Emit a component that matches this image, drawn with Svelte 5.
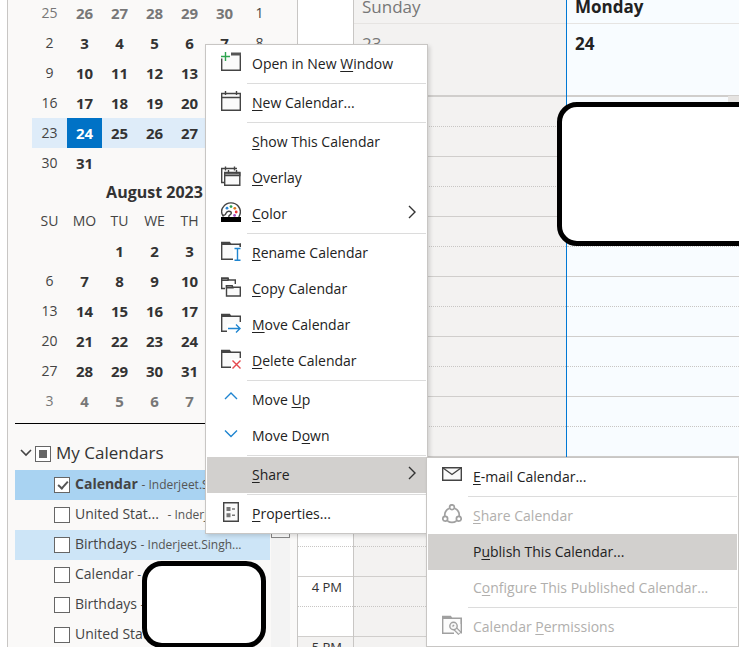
<script lang="ts">
  type Day = { day: number; dim?: boolean; today?: boolean };
  type MenuItem = {
    label?: [string, string, string];
    icon?: string;
    arrow?: boolean;
    active?: boolean;
    disabled?: boolean;
    separator?: boolean;
    children?: MenuItem[];
  };

  const weekdays = ['SU', 'MO', 'TU', 'WE', 'TH', 'FR', 'SA'];

  // Builds the week rows of a month, padded with days of its neighbours
  function weeks(first: number, before: number, length: number, count: number, fill: boolean, today = 0) {
    const rows: (Day | null)[][] = [];
    for (let i = 0; i < count; i++) {
      const n = first + i;
      let cell: Day | null;
      if (n < 1) cell = before ? { day: before + n, dim: true } : null;
      else if (n > length) cell = fill ? { day: n - length, dim: true } : null;
      else cell = { day: n, today: n === today };
      if (i % 7 === 0) rows.push([]);
      rows[rows.length - 1].push(cell);
    }
    return rows;
  }

  const july = weeks(-5, 30, 31, 42, false, 24);
  const august = weeks(-1, 0, 31, 42, true);

  let calendars = $state([
    { name: 'Calendar', owner: 'Inderjeet.Singh...', checked: true, tone: 'selected' },
    { name: 'United Stat...', owner: 'Inderjeet.S...', checked: false, tone: 'spaced' },
    { name: 'Birthdays', owner: 'Inderjeet.Singh...', checked: false, tone: 'hover' },
    { name: 'Calendar', owner: '', checked: false, tone: '' },
    { name: 'Birthdays', owner: '', checked: false, tone: '' },
    { name: 'United Stat...', owner: '', checked: false, tone: '' }
  ]);
  let partial = $state(true);

  const hours = ['8 AM', '9 AM', '10 AM', '11 AM', '12 PM', '1 PM', '2 PM', '3 PM', '4 PM', '5 PM'];

  const shareMenu: MenuItem[] = [
    { label: ['', 'E', '-mail Calendar...'], icon: 'mail' },
    { separator: true },
    { label: ['', 'S', 'hare Calendar'], icon: 'share', disabled: true },
    { label: ['P', 'u', 'blish This Calendar...'], active: true },
    { label: ['C', 'o', 'nfigure This Published Calendar...'], disabled: true },
    { separator: true },
    { label: ['Calendar ', 'P', 'ermissions'], icon: 'permissions', disabled: true }
  ];

  const mainMenu: MenuItem[] = [
    { label: ['Open in New ', 'W', 'indow'], icon: 'window' },
    { separator: true },
    { label: ['', 'N', 'ew Calendar...'], icon: 'calendar' },
    { separator: true },
    { label: ['', 'S', 'how This Calendar'] },
    { label: ['', 'O', 'verlay'], icon: 'overlay' },
    { label: ['', 'C', 'olor'], icon: 'color', arrow: true },
    { separator: true },
    { label: ['', 'R', 'ename Calendar'], icon: 'rename' },
    { label: ['', 'C', 'opy Calendar'], icon: 'copy' },
    { label: ['', 'M', 'ove Calendar'], icon: 'move' },
    { label: ['', 'D', 'elete Calendar'], icon: 'delete' },
    { separator: true },
    { label: ['Move ', 'U', 'p'], icon: 'up' },
    { label: ['Move D', 'o', 'wn'], icon: 'down' },
    { separator: true },
    { label: ['', 'S', 'hare'], arrow: true, active: true, children: shareMenu },
    { separator: true },
    { label: ['', 'P', 'roperties...'], icon: 'properties' }
  ];
</script>

{#snippet icon(name: string | undefined)}
  <svg class="icon" width="20" height="20" viewBox="0 0 20 20" fill="none" stroke="#444" stroke-width="1.4" aria-hidden="true">
    {#if name === 'window'}
      <path d="M.7 6h2L10 3h9.300v15.300H.7z" fill="#fafafa" stroke="none" />
      <path d="M.7 6.500v11.800h18.600V1" />
      <path d="M10 2h10" stroke="#555" stroke-width="3" />
      <path d="M4.500 0v9M0 4.500h9" stroke="#2ea44f" />
    {:else if name === 'calendar'}
      <path d="M.7 2.500h18.600v16.800H.7zM.7 6.500h18.600M4.500 0v4M15.500 0v4" fill="#fafafa" />
    {:else if name === 'overlay'}
      <path d="M3 16.500H.7V2.500H16M4.500 .5v4M13.500 .5v4" />
      <path d="M3.700 6.500h15.100v12.800H3.700z" fill="#fafafa" />
      <path d="M3.700 7h15.100v2.500H3.700z" fill="#aaa" />
      <path d="M7.500 4v3.500M15.500 4v3.500" />
    {:else if name === 'color'}
      <path d="M2.500 14.500C.2 11.500.1 7.500 2.500 4.600 6-.2 13.500-.4 17.300 4.200c2.700 3.400 2.500 7.500.5 10.800" />
      <path d="M1.500 13c2 .8 3-.2 3.500-1.700.8-2.200 2.800-2.300 4.200-1.800 1.600.6 1.300 2.200.2 3-1 .8-2.200 1.200-1.500 2.800" />
      <circle cx="6" cy="6.200" r="1.400" fill="#2b88d8" stroke="none" />
      <circle cx="10" cy="4.600" r="1.400" fill="#2ea44f" stroke="none" />
      <circle cx="13.800" cy="6.300" r="1.400" fill="#e07b1a" stroke="none" />
      <circle cx="15.200" cy="10" r="1.400" fill="#e33" stroke="none" />
      <circle cx="13.600" cy="13.400" r="1.400" fill="#a04bc0" stroke="none" />
      <path d="M0 15h20v5H0z" fill="#000" stroke="none" />
    {:else if name === 'copy'}
      <path d="M4 11.500H.7V1.200h6.300l.8 1.800h6.500V7" />
      <path d="M.7 1.200h6.300v2H.7z" fill="#bbb" />
      <path d="M5.500 8.700h5.500l1 1.600h7.300v8.700H5.500z" fill="#fafafa" />
      <path d="M5.500 8.700h5.500l.8 2H5.500z" fill="#bbb" />
    {:else if name === 'rename' || name === 'move' || name === 'delete' || name === 'permissions'}
      <path d="M.7 1.500h8l1 1h9.600v15.800H.7z" fill="#fafafa" stroke="none" />
      <path d="M12 18.300H.7V3.200h18.600V9" />
      <path d="M.7 1.500h7.800l1 1.500H.7z" fill="#bbb" />
      {#if name === 'rename'}
        <path d="M12 5.500h8V20h-8z" fill="#fff" stroke="none" />
        <path d="M19.300 2.500V6" />
        <path d="M13.500 7.500h6M13.500 19.300h6M16.500 7.500v12" stroke="#1f85d0" />
      {:else if name === 'move'}
        <path d="M6 11h14v9H6z" fill="#fff" stroke="none" />
        <path d="M7 15.500h12M15 11.500l4 4-4 4" stroke="#1f85d0" />
      {:else if name === 'delete'}
        <path d="M10 10h10v10H10z" fill="#fff" stroke="none" />
        <path d="M11.500 11.500l8 8M19.500 11.500l-8 8" stroke="#e5484d" />
      {:else}
        <path d="M19.300 3v15.500" />
        <path d="M13 13.500l5 5" stroke-width="4.500" />
        <path d="M13 13.500l4.500 4.500" stroke="#eee" stroke-width="2" />
        <circle cx="11.500" cy="11" r="3.700" fill="#eee" />
        <path d="M10.500 11.500l1.500-1.500" />
      {/if}
    {:else if name === 'up'}
      <path d="M4 11l6-6 6 6" stroke="#1f85d0" />
    {:else if name === 'down'}
      <path d="M4 6.500l6 6 6-6" stroke="#1f85d0" />
    {:else if name === 'properties'}
      <path d="M2.700.7h14.600v18.600H2.700z" fill="#fafafa" />
      <path d="M5.500 7h4M5.500 13.300h4" stroke="#777" stroke-width="4" />
      <path d="M11 7h3M11 13.300h3" stroke="#777" />
    {:else if name === 'mail'}
      <path d="M.7 2.700h18.600v12.600H.7z" fill="#fafafa" />
      <path d="M.7 2.700l9.300 6.800 9.300-6.800" />
    {:else if name === 'share'}
      <path d="M7 4.500C4 6 2.500 9 2.800 12M13 4.500c3 1.500 4.500 4.500 4.200 7.500M5.500 17c2.800 1.800 6.200 1.800 9 0" stroke-width="1.700" />
      <circle cx="10" cy="3.200" r="2.400" stroke-width="1.700" />
      <circle cx="3.200" cy="14.800" r="2.400" stroke-width="1.700" />
      <circle cx="16.800" cy="14.800" r="2.400" stroke-width="1.700" />
    {/if}
  </svg>
{/snippet}

{#snippet menu(items: MenuItem[])}
  {#each items as item}
    {#if item.separator}
      <li class="separator" role="separator"></li>
    {:else if item.label}
      <li class="entry" role="none">
        <button class="item" class:active={item.active} disabled={item.disabled} role="menuitem">
          {@render icon(item.icon)}
          <span class="label">{item.label[0]}<u>{item.label[1]}</u>{item.label[2]}</span>
          {#if item.arrow}
            <svg class="arrow" width="8" height="14" viewBox="0 0 8 14" fill="none" stroke="#333" stroke-width="1.4" aria-hidden="true">
              <path d="M1 1l6 6-6 6" />
            </svg>
          {/if}
        </button>
        {#if item.children}
          <ul class="menu submenu" role="menu">
            {@render menu(item.children)}
          </ul>
        {/if}
      </li>
    {/if}
  {/each}
{/snippet}

{#snippet month(rows: (Day | null)[][])}
  <tbody>
    {#each rows as row}
      <tr class:current={row.some((cell) => cell?.today)}>
        {#each row as cell, i}
          <td class:work={i > 0 && i < 6} class:dim={cell?.dim} class:today={cell?.today}>{cell?.day ?? ''}</td>
        {/each}
      </tr>
    {/each}
  </tbody>
{/snippet}

<div class="app">
  <aside class="sidebar">
    <div class="months">
      <table>{@render month(july)}</table>
      <table>
        <caption>August 2023</caption>
        <thead>
          <tr>{#each weekdays as name}<th>{name}</th>{/each}</tr>
        </thead>
        {@render month(august)}
      </table>
    </div>
    <section class="lists">
      <div class="tree">
        <div class="group">
          <svg width="12" height="8" viewBox="0 0 12 8" fill="none" stroke="#444" stroke-width="1.6" aria-hidden="true">
            <path d="M1 1l5 5 5-5" />
          </svg>
          <input id="group" type="checkbox" bind:indeterminate={partial} />
          <label for="group">My Calendars</label>
        </div>
        {#each calendars as calendar, i}
          <div class="row {calendar.tone}">
            <input id="calendar-{i}" type="checkbox" bind:checked={calendar.checked} />
            <label for="calendar-{i}"><span class="name">{calendar.name}</span> <small>- {calendar.owner}</small></label>
          </div>
        {/each}
        <div class="redacted small"></div>
      </div>
      <div class="scrollbar"><div class="thumb"></div></div>
    </section>
  </aside>

  <main class="week">
    <div class="times">
      <div class="head"></div>
      {#each hours as hour}
        <div class="hour" class:off={hour === '5 PM'}><span>{hour}</span></div>
      {/each}
    </div>
    <div class="day sunday">
      <header class="head"><div class="weekday">Sunday</div><div class="date">23</div></header>
      {#each hours as _}<div class="hour"></div>{/each}
    </div>
    <div class="day monday">
      <header class="head"><div class="weekday">Monday</div><div class="date">24</div></header>
      {#each hours as _}<div class="hour"></div>{/each}
      <div class="edge"></div>
      <div class="redacted large"></div>
    </div>
  </main>

  <ul class="menu context" role="menu">
    {@render menu(mainMenu)}
  </ul>
</div>

<style>
  :global(body) { background: #fff; }
  .app { position: relative; display: flex; height: 100vh; overflow: hidden; color: #333; font: 14px/20px "Open Sans", "Noto Sans", sans-serif; }

  .sidebar { flex: none; box-sizing: border-box; width: 291px; margin-left: 7px; border: solid #c8c6c4; border-width: 0 1px; background: #faf9f8; }
  .months { margin: -2px 7px 0; padding: 0 20px 7px 17px; border-bottom: 1px solid #000; }
  table { width: 245px; table-layout: fixed; border-collapse: collapse; }
  caption { height: 28px; color: #333; font-size: 16px; font-weight: 700; line-height: 28px; }
  td, th { height: 30px; padding: 0; color: #444; font-weight: 400; line-height: 30px; text-align: center; }
  .work { color: #333; font-size: 15px; font-weight: 700; }
  .dim { color: #777; }
  .current { background: #deecf9; }
  .today { color: #fff; background: #0072c6; }

  .lists { display: flex; margin-top: 12px; }
  .tree { position: relative; width: 255px; margin-left: 7px; }
  .group { display: flex; align-items: center; height: 34px; padding-left: 5px; font-size: 17px; }
  .group input { margin: 2px 5px 0 3px; }
  .row { display: flex; align-items: center; height: 30px; padding-left: 39px; white-space: nowrap; }
  .row input { margin-right: 5px; }
  .row label { padding-bottom: 2px; color: #444; }
  .row small { color: #555; font-size: 12px; }
  .selected { background: #a9d3f2; }
  .selected .name { font-weight: 700; }
  .spaced .name { margin-right: 5px; }
  .hover { background: #cde5f7; }
  input { position: relative; flex: none; box-sizing: border-box; width: 16px; height: 16px; margin: 0; border: 1px solid #666; background: #fff; appearance: none; }
  input:checked::after { content: ''; position: absolute; top: 1px; left: 5px; width: 4px; height: 8px; border: solid #555; border-width: 0 2px 2px 0; transform: rotate(42deg); }
  input:indeterminate::after { content: ''; position: absolute; inset: 3px; background: #666; }
  .scrollbar { width: 19px; margin-left: 1px; background: #f3f3f3; }
  .thumb { box-sizing: border-box; height: 102px; border: 1px solid #888; background: #fff; }

  .week { display: flex; flex: 1; min-width: 0; }
  .times { flex: none; width: 55px; border-right: 1px solid #c8c6c4; }
  .day { position: relative; box-sizing: border-box; width: 212px; flex: none; }
  .head { box-sizing: border-box; height: 97px; border-bottom: 2px solid #d0cecc; }
  .times .head { border-color: transparent; }
  .weekday { box-sizing: border-box; height: 24px; padding-left: 8px; border-bottom: 1px solid #e6e4e2; font-size: 17px; line-height: 14px; }
  .date { padding: 10px 8px; font-size: 17px; }
  .sunday { color: #777; background: #f3f2f1; }
  .monday { flex: 1; border-left: 1px solid #0078d4; color: #222; background: #f8fcff; font-weight: 700; }
  .hour { box-sizing: border-box; height: 60px; border-bottom: 1px solid #d0cecc; }
  .hour::before { content: ''; display: block; height: 29px; border-bottom: 1px dotted #c8c6c4; }
  .times .hour { position: relative; }
  .hour span { position: absolute; top: 0; right: 11px; font-size: 13px; }
  .off { background: #f3f2f1; }
  .edge { position: absolute; top: 96px; right: 0; width: 11px; height: 8px; background: #e6e4e2; }

  .redacted { position: absolute; box-sizing: border-box; border: 5px solid #000; border-radius: 20px; background: #fff; }
  .small { top: 125px; left: 127px; width: 124px; height: 87px; }
  .large { top: 102px; right: -20px; left: -10px; height: 144px; }

  .menu { position: absolute; box-sizing: border-box; margin: 0; padding: 1px; border: 1px solid #c8c6c4; background: #fff; box-shadow: 2px 2px 4px rgba(0,0,0,.14); list-style: none; }
  .context { top: 44px; left: 205px; width: 223px; }
  .submenu { top: 0; left: 100%; z-index: 1; width: 313px; }
  .entry { position: relative; }
  .separator { height: 1px; margin: 1px 0 1px 40px; background: #dcdcdc; }
  .item { display: flex; align-items: center; width: 100%; height: 36px; padding: 0 10px 0 14px; border: 0; color: #222; background: none; font: inherit; text-align: left; white-space: nowrap; }
  .item.active { background: #d2d0ce; }
  .item:disabled { color: #b1afad; }
  .item:disabled .icon { opacity: .5; }
  .icon { flex: none; margin-bottom: 4px; }
  .label { flex: 1; margin-left: 11px; }
  .arrow { margin-bottom: 4px; }
  u { text-underline-offset: 2px; }
</style>
